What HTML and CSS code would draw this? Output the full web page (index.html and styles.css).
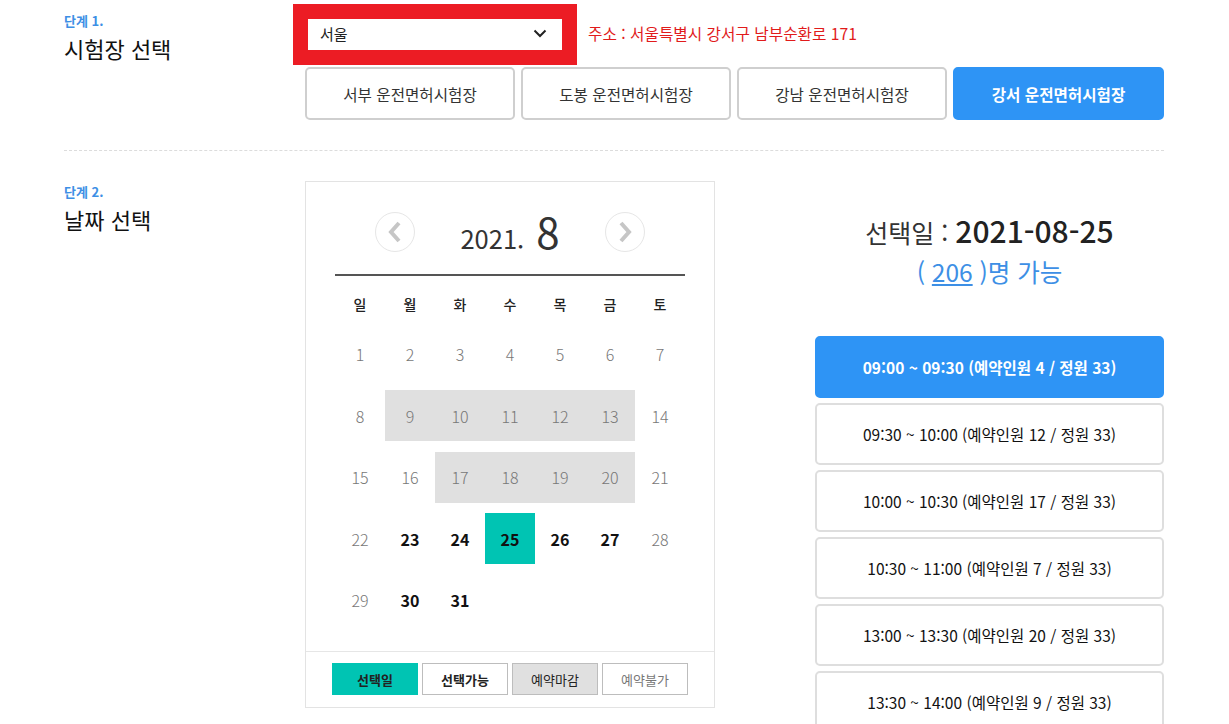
FILE: index.html
```html
<!DOCTYPE html>
<html lang="ko">
<head>
<meta charset="utf-8">
<title>시험장 예약</title>
<link rel="stylesheet" href="styles.css">
</head>
<body>
<div class="page">
  <section class="step step1">
    <div class="step-head">
      <div class="step-no">단계 1.</div>
      <div class="step-title">시험장 선택</div>
    </div>
    <div class="step-body">
      <div class="select-row">
        <div class="select-box">
          <span>서울</span>
          <svg class="select-arrow" width="14" height="9" viewBox="0 0 14 9"><path d="M1.5 1.5 L7 7 L12.5 1.5" fill="none" stroke="#222" stroke-width="2"/></svg>
        </div>
        <div class="address">주소 : 서울특별시 강서구 남부순환로 171</div>
      </div>
      <div class="center-btns">
        <div class="center-btn">서부 운전면허시험장</div>
        <div class="center-btn">도봉 운전면허시험장</div>
        <div class="center-btn">강남 운전면허시험장</div>
        <div class="center-btn active">강서 운전면허시험장</div>
      </div>
    </div>
  </section>

  <div class="divider"></div>

  <section class="step step2">
    <div class="step-head">
      <div class="step-no">단계 2.</div>
      <div class="step-title">날짜 선택</div>
    </div>
    <div class="calendar">
      <div class="cal-main">
        <div class="cal-nav">
          <div class="nav-btn"><svg width="14" height="22" viewBox="0 0 14 22"><path d="M11 2 L3 11 L11 20" fill="none" stroke="#c6c6c6" stroke-width="4"/></svg></div>
          <div class="cal-title"><span class="year">2021.</span><span class="month">8</span></div>
          <div class="nav-btn"><svg width="14" height="22" viewBox="0 0 14 22"><path d="M3 2 L11 11 L3 20" fill="none" stroke="#c6c6c6" stroke-width="4"/></svg></div>
        </div>
        <div class="cal-line"></div>
        <div class="weekdays">
          <span>일</span><span>월</span><span>화</span><span>수</span><span>목</span><span>금</span><span>토</span>
        </div>
        <div class="days">
          <span class="day">1</span><span class="day">2</span><span class="day">3</span><span class="day">4</span><span class="day">5</span><span class="day">6</span><span class="day">7</span>
          <span class="day">8</span><span class="day closed">9</span><span class="day closed">10</span><span class="day closed">11</span><span class="day closed">12</span><span class="day closed">13</span><span class="day">14</span>
          <span class="day">15</span><span class="day">16</span><span class="day closed">17</span><span class="day closed">18</span><span class="day closed">19</span><span class="day closed">20</span><span class="day">21</span>
          <span class="day">22</span><span class="day open">23</span><span class="day open">24</span><span class="day selected">25</span><span class="day open">26</span><span class="day open">27</span><span class="day">28</span>
          <span class="day">29</span><span class="day open">30</span><span class="day open">31</span>
        </div>
      </div>
      <div class="legend">
        <span class="lg lg-selected">선택일</span>
        <span class="lg lg-open">선택가능</span>
        <span class="lg lg-closed">예약마감</span>
        <span class="lg lg-none">예약불가</span>
      </div>
    </div>
    <div class="slots-panel">
      <div class="sel-date"><span class="sel-label">선택일 : </span><span class="sel-value">2021-08-25</span></div>
      <div class="sel-count">( <u>206</u> )명 가능</div>
      <div class="slots">
        <div class="slot active">09:00 ~ 09:30 (예약인원 4 / 정원 33)</div>
        <div class="slot">09:30 ~ 10:00 (예약인원 12 / 정원 33)</div>
        <div class="slot">10:00 ~ 10:30 (예약인원 17 / 정원 33)</div>
        <div class="slot">10:30 ~ 11:00 (예약인원 7 / 정원 33)</div>
        <div class="slot">13:00 ~ 13:30 (예약인원 20 / 정원 33)</div>
        <div class="slot">13:30 ~ 14:00 (예약인원 9 / 정원 33)</div>
      </div>
    </div>
  </section>
</div>
</body>
</html>
```

FILE: styles.css
```css
* { box-sizing: border-box; }
html, body { margin: 0; padding: 0; background: #fff; }
body {
  font-family: "Noto Sans CJK KR", "Noto Sans", sans-serif;
  color: #222;
  overflow: hidden;
  height: 724px;
}
.page { width: 1100px; margin-left: 64px; }

.step { display: flex; }
.step-head { width: 241px; flex: none; }
.step-no { font-size: 13px; line-height: 18px; font-weight: 700; color: #3d8fe5; }
.step-title { font-size: 22px; line-height: 30px; margin-top: 3px; color: #111; }

.step1 .step-head { padding-top: 12px; }
.step-body { flex: 1; padding-top: 19px; }
.select-row { display: flex; align-items: center; height: 31px; }
.select-box {
  width: 254px; height: 31px; margin-left: 3px;
  outline: 15px solid #ec1c24;
  background: #fff;
  display: flex; align-items: center; justify-content: space-between;
  padding: 0 15px 2px 12px;
  font-size: 15px;
}
.address { margin-left: 26px; color: #e11b1b; font-size: 15.7px; padding-bottom: 2px; }
.center-btns { display: flex; gap: 6px; margin-top: 17px; }
.center-btn {
  width: 210px; height: 53px;
  border: 2px solid #cfcfcf; border-radius: 5px;
  display: flex; align-items: center; justify-content: center;
  font-size: 15.6px; color: #333;
}
.center-btn.active { background: #2e94f5; border-color: #2e94f5; color: #fff; font-weight: 700; width: 211px; }

.divider { border-top: 1px dashed #dcdcdc; margin-top: 30px; }

.step2 { padding-top: 30px; }
.step2 .step-head { padding-top: 2px; }

.calendar { width: 410px; height: 527px; border: 1px solid #e3e3e3; flex: none; display: flex; flex-direction: column; }
.cal-main { padding: 30px 29px 0; flex: 1; }
.cal-nav { width: 270px; margin: 0 auto; height: 40px; display: flex; align-items: center; justify-content: space-between; }
.nav-btn { width: 40px; height: 40px; border: 1px solid #e6e6e6; border-radius: 50%; display: flex; align-items: center; justify-content: center; }
.cal-title { display: flex; align-items: baseline; color: #333; margin-top: 2px; }
.year { font-size: 25.5px; }
.month { font-size: 42px; margin-left: 12px; line-height: 40px; }
.cal-line { height: 2px; background: #555; margin-top: 22px; }
.weekdays { display: grid; grid-template-columns: repeat(7, 50px); margin-top: 16px; height: 24px; align-items: center; }
.weekdays span { text-align: center; font-size: 14px; font-weight: 500; color: #222; }
.days { display: grid; grid-template-columns: repeat(7, 50px); grid-auto-rows: 51px; row-gap: 10.5px; margin-top: 12.5px; }
.day { display: flex; align-items: center; justify-content: center; font-size: 16px; font-weight: 300; color: #777; }
.day.closed { background: #e0e0e0; }
.day.open { color: #111; font-weight: 700; }
.day.selected { background: #00c4b3; color: #111; font-weight: 700; }

.legend { border-top: 1px solid #e6e6e6; height: 56px; display: flex; justify-content: center; align-items: center; gap: 4px; padding-bottom: 1px; }
.lg { width: 86px; height: 32px; border: 1px solid #bdbdbd; display: flex; align-items: center; justify-content: center; font-size: 13px; color: #222; }
.lg-selected { background: #00c4b3; border-color: #00c4b3; font-weight: 700; }
.lg-open { font-weight: 700; }
.lg-closed { background: #e0e0e0; }
.lg-none { color: #777; }

.slots-panel { margin-left: 100px; width: 349px; padding-top: 29px; text-align: center; }
.sel-date { line-height: 40px; color: #222; }
.sel-label { font-size: 25px; color: #333; }
.sel-value { font-size: 30px; font-weight: 500; }
.sel-count { font-size: 24.5px; line-height: 36px; color: #3d8fe5; margin-top: -2px; }
.slots { margin-top: 46px; display: flex; flex-direction: column; gap: 5px; }
.slot { height: 62px; border: 2px solid #dedede; border-radius: 5px; display: flex; align-items: center; justify-content: center; font-size: 15.5px; color: #111; }
.slot.active { background: #2e94f5; border-color: #2e94f5; color: #fff; font-weight: 700; }
```
